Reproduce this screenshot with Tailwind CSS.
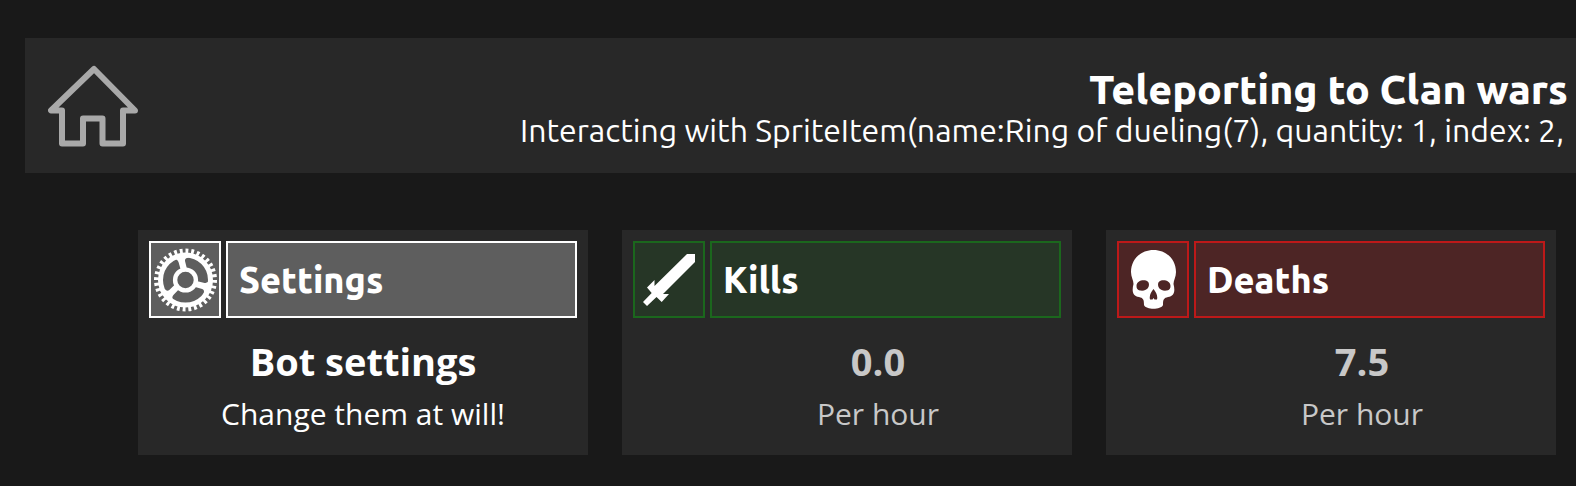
<!DOCTYPE html>
<html lang="en">
<head>
    <meta charset="UTF-8">
    <meta name="viewport" content="width=device-width, initial-scale=1">
    <title>Bot status</title>
    <script src="https://cdn.jsdelivr.net/npm/@tailwindcss/browser@4"></script>
</head>
<body class="bg-[#191919] font-['Ubuntu','Noto_Sans',sans-serif] text-white min-h-screen">
    <!-- Header -->
    <header class="mt-[38px] ml-[25px] h-[135px] bg-[#282828] flex items-center justify-between pl-[23px] pr-2">
      <a href="#" aria-label="Home" class="shrink-0">
        <svg class="w-[90px] h-[82px]" viewBox="0 0 90 82" fill="none" stroke="#a9a9a9" stroke-width="6" stroke-linejoin="round">
          <path d="M3 45.500H14V78.500H35V53.500H54.500V78.500H75V45.500H87L46 4Z"/>
        </svg>
      </a>
      <div class="text-right whitespace-nowrap pt-1">
        <h1 class="text-[41px] leading-[44px] font-extrabold">Teleporting to Clan wars</h1>
        <p class="text-[32px] leading-[38px] pr-1">Interacting with SpriteItem(name:Ring of dueling(7), quantity: 1, index: 2,</p>
      </div>
    </header>

    <!-- Cards -->
    <main class="grid grid-cols-3 gap-[34px] mt-[57px] pl-[138px] pr-5">
      <section class="bg-[#282828] h-[225px] p-[11px]">
        <div class="flex gap-[5px] h-[77px]">
          <div class="w-[72px] shrink-0 border-2 border-white bg-[#5e5e5e] flex items-center justify-center">
            <svg class="w-16 h-16" viewBox="-32.500 -32 64 64" fill="none" stroke="#fff">
              <circle r="25" stroke-width="5"/>
              <circle r="29" stroke-width="5" pathLength="64" stroke-dasharray="1 1"/>
              <circle r="10.400" stroke-width="4.400"/>
              <g fill="#fff" stroke="none">
                <path id="spoke" d="M-5 -11L-7 -18Q-8 -21 -12 -21L-9 -25H3V-22.500Q-1 -22 -.5 -19L1.500 -11Z"/>
                <use href="#spoke" transform="rotate(120)"/>
                <use href="#spoke" transform="rotate(240)"/>
              </g>
            </svg>
          </div>
          <h2 class="flex-1 border-2 border-white bg-[#5e5e5e] flex items-center pl-[11px] text-[36px] font-extrabold">Settings</h2>
        </div>
        <div class="text-center mt-[17px] font-['Segoe_UI','Open_Sans',sans-serif]">
          <p class="text-[38px] leading-[52px] font-bold">Bot settings</p>
          <p class="text-[30px] leading-[54px]">Change them at will!</p>
        </div>
      </section>

      <section class="bg-[#282828] h-[225px] p-[11px]">
        <div class="flex gap-[5px] h-[77px]">
          <div class="w-[72px] shrink-0 border-2 border-[#1b671d] bg-[#263626] flex items-center justify-center">
            <svg class="w-[52px] h-[52px]" viewBox="0 0 52 52" fill="#fff">
              <path d="M44 0H52V8L20 40H26L18.700 48L13.500 43L4 52L0 48L8.700 39L4 33.500L11.500 26V32Z"/>
            </svg>
          </div>
          <h2 class="flex-1 border-2 border-[#1b671d] bg-[#263626] flex items-center pl-[11px] text-[36px] font-extrabold">Kills</h2>
        </div>
        <div class="text-center mt-[17px] pl-[62px] text-[#c8c8c8] font-['Segoe_UI','Open_Sans',sans-serif]">
          <p class="text-[38px] leading-[52px] font-bold">0.0</p>
          <p class="text-[30px] leading-[54px]">Per hour</p>
        </div>
      </section>

      <section class="bg-[#282828] h-[225px] p-[11px]">
        <div class="flex gap-[5px] h-[77px]">
          <div class="w-[72px] shrink-0 border-2 border-[#bd1919] bg-[#4d2525] flex items-center justify-center">
            <svg class="w-[45px] h-[59px]" viewBox="0 0 45 59" fill="#fff" fill-rule="evenodd">
              <path d="M22.500 0C35 0 45 9 45 22C45 27 42.500 30 42.500 34C44.500 42 43 46 37 47C33 48 32 49 32 55C30 60 15 60 13 55C13 49 12 48 8 47C2 46 .5 42 2.500 34C2.500 30 0 27 0 22C0 9 10 0 22.500 0ZM5.500 36C5.500 31 11 29.500 15 30.500C18 31.500 18.500 34 17.500 37C16 40.500 12 41 9 40.500C6.500 40 5.500 38.500 5.500 36ZM39.500 36C39.500 31 34 29.500 30 30.500C27 31.500 26.500 34 27.500 37C29 40.500 33 41 36 40.500C38.500 40 39.500 38.500 39.500 36ZM22.500 39C20 42 18 46 19 49.500H21.500L22.500 48L23.500 49.500H26C27 46 25 42 22.500 39Z"/>
            </svg>
          </div>
          <h2 class="flex-1 border-2 border-[#bd1919] bg-[#4d2525] flex items-center pl-[11px] text-[36px] font-extrabold">Deaths</h2>
        </div>
        <div class="text-center mt-[17px] pl-[62px] text-[#c8c8c8] font-['Segoe_UI','Open_Sans',sans-serif]">
          <p class="text-[38px] leading-[52px] font-bold">7.5</p>
          <p class="text-[30px] leading-[54px]">Per hour</p>
        </div>
      </section>
    </main>
</body>
</html>
